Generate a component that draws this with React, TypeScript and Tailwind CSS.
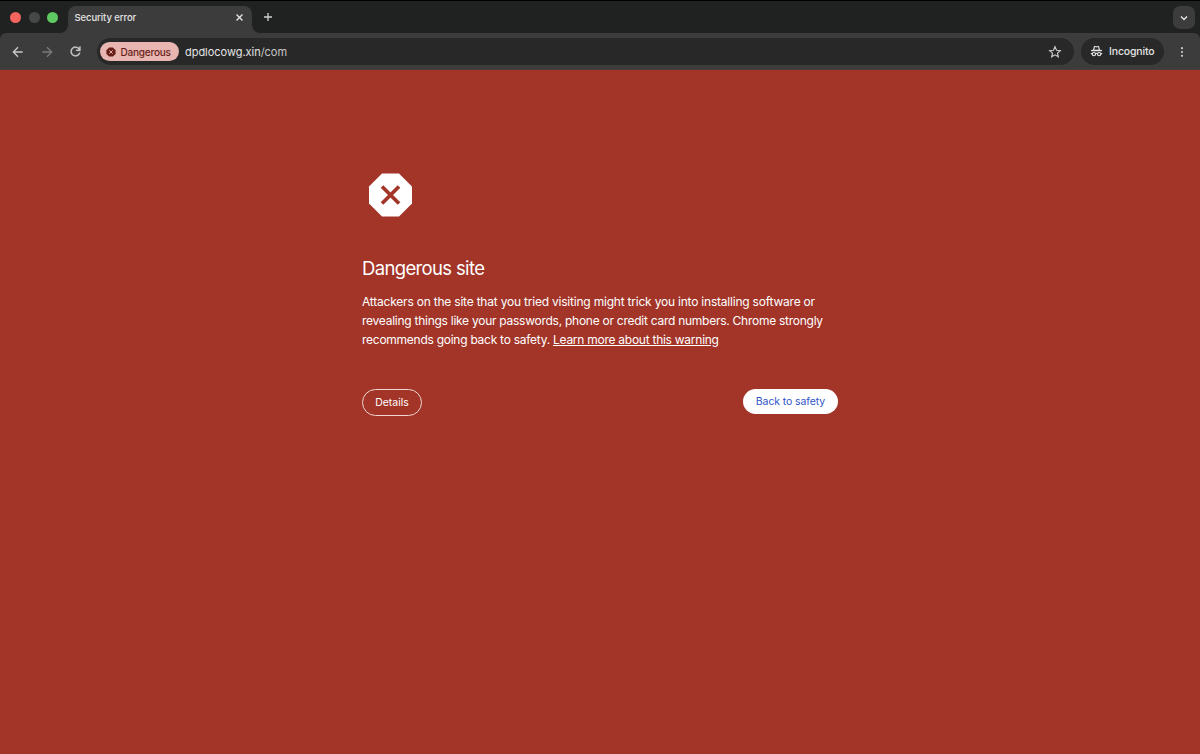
import type { ReactNode } from "react";

const windowControls = ["bg-[#f4645f]", "bg-[#464847]", "bg-[#5fc962]"];

type IconProps = {
  className?: string;
  children: ReactNode;
};

const Icon = ({ className = "", children }: IconProps) => (
  <svg viewBox="0 0 24 24" fill="currentColor" className={`shrink-0 ${className}`}>
    {children}
  </svg>
);

const TabStrip = () => (
  <div className="flex h-[33px] border-t border-black">
    <div className="flex w-[68px] items-center gap-[7.3px] pl-[10.4px]">
      {windowControls.map((color) => (
        <span key={color} className={`h-[11px] w-[11px] rounded-full ${color}`} />
      ))}
    </div>

    <div className="relative mt-[5px] flex w-[184px] justify-between rounded-t-[8px] bg-[#3c3c3c] pl-[6.5px] pr-[7px] text-[#e3e3e3]">
      <svg viewBox="0 0 8 8" className="absolute -left-2 bottom-0 h-2 w-2 fill-[#3c3c3c]">
        <path d="M8 0v8H0a8 8 0 0 0 8-8z" />
      </svg>
      <span className="mt-[5px] text-[9.5px] leading-[14px] font-medium tracking-[-0.08px]">Security error</span>
      <Icon className="mt-[6px] h-[11px] w-[11px]">
        <path d="M5.500 5.500l13 13M18.500 5.500l-13 13" stroke="currentColor" strokeWidth="3" />
      </Icon>
      <svg viewBox="0 0 8 8" className="absolute -right-2 bottom-0 h-2 w-2 fill-[#3c3c3c]">
        <path d="M0 0v8h8a8 8 0 0 1-8-8z" />
      </svg>
    </div>

    <Icon className="ml-[10px] mt-[10px] h-3 w-3 text-[#d0d1d1]">
      <path d="M12 4v16M4 12h16" stroke="currentColor" strokeWidth="2.6" />
    </Icon>

    <div className="ml-auto mr-[5px] mt-[5px] flex h-[23px] w-[22px] items-center justify-center rounded-[7px] bg-[#3c3c3c] text-[#e3e3e3]">
      <svg viewBox="0 0 10 10" fill="none" stroke="currentColor" strokeWidth="1.5" className="h-[10px] w-[10px]">
        <path d="M2 3.500l3 3 3-3" />
      </svg>
    </div>
  </div>
);

const Toolbar = () => (
  <div className="flex h-[37px] items-center rounded-t-[6px] border-b border-[#4b3b39] bg-[#3c3c3c] pt-px text-[#c9c9c9]">
    <Icon className="ml-[11px] h-[14px] w-[14px]">
      <path d="M20 12H5M12 4l-8 8 8 8" fill="none" stroke="currentColor" strokeWidth="2.3" />
    </Icon>
    <Icon className="ml-[14.5px] h-[14px] w-[14px] text-[#7a7a7a]">
      <path d="M4 12h15M12 4l8 8-8 8" fill="none" stroke="currentColor" strokeWidth="2.3" />
    </Icon>
    <Icon className="ml-[14.5px] h-[15px] w-[15px]">
      <path d="M12 20q-3.350 0-5.675-2.325T4 12t2.325-5.675T12 4q1.725 0 3.300.713T18 6.750V4h2v7h-7V9h4.200q-.8-1.400-2.188-2.200T12 6Q9.500 6 7.750 7.750T6 12t1.750 4.250T12 18q1.925 0 3.475-1.100T17.650 14h2.100q-.7 2.650-2.850 4.325T12 20" stroke="currentColor" strokeWidth=".4" />
    </Icon>

    <div className="ml-[14px] flex h-[27px] w-[977px] items-center rounded-full bg-[#282828] pl-[3px] pr-[12px]">
      <div className="flex h-[19px] w-[79px] shrink-0 items-center rounded-full bg-[#e9b5b0] pl-[6px] text-[#681e18]">
        <Icon className="h-[10px] w-[10px]">
          <path d="M7.500 1h9L23 7.500v9L16.500 23h-9L1 16.500v-9z" />
          <path d="M8 8l8 8M16 8l-8 8" stroke="#e9b5b0" strokeWidth="2.3" />
        </Icon>
        <span className="ml-[4.5px] text-[10px] leading-[14px] font-medium tracking-[-0.2px]">Dangerous</span>
      </div>
      <span className="ml-[6px] text-[11px] leading-[14px] tracking-[-0.03px] text-[#e3e3e3]">
        dpdlocowg.xin<span className="text-[#c7c7c7]">/com</span>
      </span>
      <Icon className="ml-auto h-[14px] w-[14px]">
        <path d="M12 3l2.700 6 6.400.6-4.800 4.300 1.400 6.300L12 16.900l-5.700 3.300 1.400-6.300L2.900 9.600 9.300 9z" fill="none" stroke="currentColor" strokeWidth="2" />
      </Icon>
    </div>

    <div className="ml-[7px] flex h-[27px] w-[83px] items-center rounded-full bg-[#282828] pl-[9px] text-[#e3e3e3]">
      <Icon className="h-[13px] w-[13px]">
        <path d="M6.500 10l1.500-6.500q.4-1.200 1.500-.8l2.500.8 2.500-.8q1.100-.4 1.500.8L17.500 10z" fill="none" stroke="currentColor" strokeWidth="2.2" />
        <path d="M2 9h20v2.600H2z" />
        <g fill="none" stroke="currentColor" strokeWidth="2.200">
          <circle cx="7.200" cy="16.800" r="3" />
          <circle cx="16.800" cy="16.800" r="3" />
          <path d="M10 16q2-1.500 4 0M1.500 15.800h2.700M19.800 15.800h2.700" />
        </g>
      </Icon>
      <span className="ml-[6px] pt-px text-[10.5px] leading-[14px] font-medium tracking-[-0.15px]">Incognito</span>
    </div>

    <Icon className="ml-[10.5px] h-[14px] w-[14px]">
      <circle cx="12" cy="5.500" r="1.900" />
      <circle cx="12" cy="12" r="1.900" />
      <circle cx="12" cy="18.500" r="1.900" />
    </Icon>
  </div>
);

const Warning = () => (
  <main className="mx-auto w-[476px] pt-[103px] text-white">
    <svg viewBox="0 0 44 44" className="ml-[6px] h-[44px] w-[44px]">
      <path d="M14 .500h17l13 13v17l-13 13h-17l-13-13v-17z" fill="white" />
      <path d="M14 13.500l17 17M31 13.500l-17 17" stroke="#a23428" strokeWidth="3.700" />
    </svg>

    <h1 className="mt-[38px] text-[18.5px] leading-[26px] tracking-[-0.65px]">Dangerous site</h1>
    <p className="mt-[11px] text-[12px] leading-[19px] tracking-[-0.26px] whitespace-nowrap">
      <span className="tracking-[-0.21px]">Attackers on the site that you tried visiting might trick you into installing software or</span>
      <br />
      revealing things like your passwords, phone or credit card numbers. Chrome strongly
      <br />
      recommends going back to safety.{" "}
      <a href="#" className="underline">Learn more about this warning</a>
    </p>

    <div className="mt-[40px] flex items-start justify-between">
      <button className="h-[27px] w-[60px] rounded-full border border-[#f0d5d2] pt-px text-[10.5px] leading-[14px]">
        Details
      </button>
      <button className="h-[25px] w-[95px] rounded-full bg-white pt-px text-[10.5px] leading-[14px] tracking-[-0.1px] text-[#2f55c7]">
        Back to safety
      </button>
    </div>
  </main>
);

export default function App() {
  return (
    <div className="h-screen overflow-hidden bg-[#a23428] font-['Inter','Liberation_Sans',sans-serif]">
      <header className="bg-[#202221]">
        <TabStrip />
        <Toolbar />
      </header>
      <Warning />
    </div>
  );
}
